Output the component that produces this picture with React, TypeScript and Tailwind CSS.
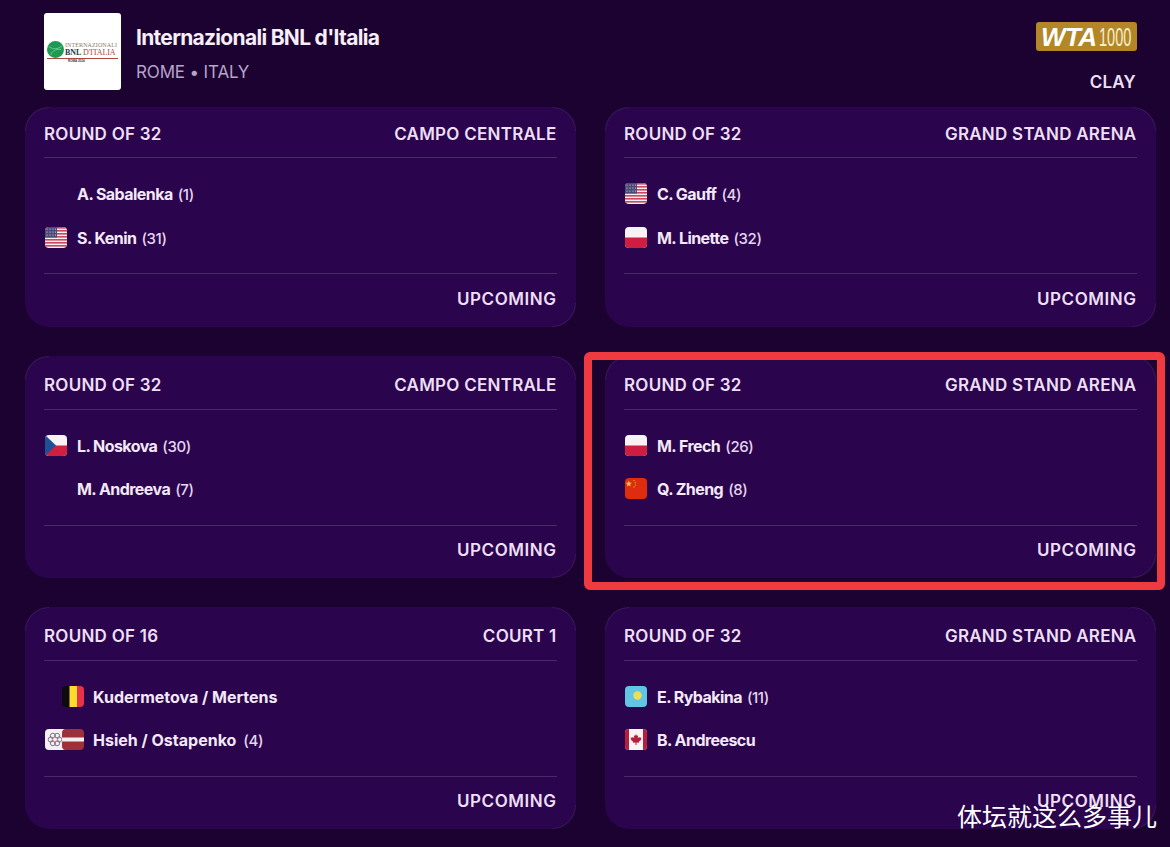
import React from 'react'

type FlagCode = 'us' | 'pl' | 'cn' | 'cz' | 'be' | 'tw' | 'lv' | 'kz' | 'ca'

const FlagArt = ({ code }: { code: FlagCode }) => {
    switch (code) {
        case 'us':
            return (
                <>
                    <rect width="22" height="21" fill="#f6eef2" />
                    {[0, 3, 6, 9, 12, 15, 18].map((y) => (
                        <rect key={y} y={y} width="22" height="1.6" fill="#c8485f" />
                    ))}
                    <rect width="12" height="10.5" fill="#4a4a78" />
                    {[2, 5, 8].map((y) =>
                        [2, 5, 8, 10.5].map((x) => (
                            <circle key={`${x}-${y}`} cx={x} cy={y} r="0.6" fill="#e8e4f0" />
                        )),
                    )}
                </>
            )
        case 'pl':
            return (
                <>
                    <rect width="22" height="21" fill="#f7f2f4" />
                    <rect y="10.5" width="22" height="10.5" fill="#cf1d41" />
                </>
            )
        case 'cn':
            return (
                <>
                    <rect width="22" height="21" fill="#dd2c0e" />
                    <path d="M3.8 2.5l.8 2.2 2.3.1-1.8 1.4.6 2.3-1.9-1.3-1.9 1.3.6-2.3L.7 4.8 3 4.7z" fill="#f7d046" />
                    <circle cx="9" cy="2.5" r="0.6" fill="#f7d046" />
                    <circle cx="10.3" cy="4.6" r="0.6" fill="#f7d046" />
                    <circle cx="10.3" cy="7" r="0.6" fill="#f7d046" />
                    <circle cx="9" cy="9" r="0.6" fill="#f7d046" />
                </>
            )
        case 'cz':
            return (
                <>
                    <rect width="22" height="21" fill="#f7f2f4" />
                    <rect y="10.5" width="22" height="10.5" fill="#d11f3f" />
                    <path d="M0 0l11 10.5L0 21z" fill="#1f4f95" />
                </>
            )
        case 'be':
            return (
                <>
                    <rect width="8" height="21" fill="#0d0b0d" />
                    <rect x="7.5" width="7.5" height="21" fill="#fbdc2e" />
                    <rect x="15" width="7" height="21" fill="#e8324a" />
                </>
            )
        case 'tw':
            return (
                <>
                    <rect width="22" height="21" fill="#f4f0f2" />
                    {[0, 60, 120, 180, 240, 300].map((deg) => (
                        <circle
                            key={deg}
                            cx={10 + 4.2 * Math.cos((deg * Math.PI) / 180)}
                            cy={10.5 + 4.2 * Math.sin((deg * Math.PI) / 180)}
                            r="2.6"
                            fill="none"
                            stroke="#6d6a86"
                            strokeWidth="0.9"
                        />
                    ))}
                    <circle cx="10" cy="10.5" r="2.4" fill="#f4f0f2" stroke="#b8646c" strokeWidth="0.9" />
                </>
            )
        case 'lv':
            return (
                <>
                    <rect width="22" height="21" fill="#9e3039" />
                    <rect y="8.5" width="22" height="4" fill="#f5eef0" />
                </>
            )
        case 'kz':
            return (
                <>
                    <rect width="22" height="21" fill="#62c5e4" />
                    <circle cx="12.5" cy="9.5" r="4.2" fill="#ecdf52" />
                </>
            )
        case 'ca':
            return (
                <>
                    <rect width="22" height="21" fill="#f8f4f5" />
                    <rect width="4" height="21" fill="#b81d3b" />
                    <rect x="18" width="4" height="21" fill="#b81d3b" />
                    <path d="M11 5l1 1.9 1.2-.6-.5 2.9 1.6-1.4.3 1 1.8-.3-.6 1.7.7.4-2.7 2.2.3 1-2.6-.3V16h-1v-2.5l-2.6.3.3-1-2.7-2.2.7-.4-.6-1.7 1.8.3.3-1 1.6 1.4-.5-2.9 1.2.6z" fill="#b81d3b" />
                </>
            )
    }
}

const Flag = ({ code, className = '' }: { code: FlagCode; className?: string }) => (
    <svg viewBox="0 0 22 21" className={`h-[21px] w-[22px] shrink-0 rounded-[4px] ${className}`}>
        <FlagArt code={code} />
    </svg>
)

type Player = {
    name: string
    seed?: string
    flags: FlagCode[]
}

type MatchType = {
    round: string
    court: string
    players: Player[]
    doubles?: boolean
    first?: boolean
    marked?: boolean
}

const matches: MatchType[] = [
    {
        round: 'ROUND OF 32',
        court: 'CAMPO CENTRALE',
        first: true,
        players: [
            { name: 'A. Sabalenka', seed: '(1)', flags: [] },
            { name: 'S. Kenin', seed: '(31)', flags: ['us'] },
        ],
    },
    {
        round: 'ROUND OF 32',
        court: 'GRAND STAND ARENA',
        first: true,
        players: [
            { name: 'C. Gauff', seed: '(4)', flags: ['us'] },
            { name: 'M. Linette', seed: '(32)', flags: ['pl'] },
        ],
    },
    {
        round: 'ROUND OF 32',
        court: 'CAMPO CENTRALE',
        players: [
            { name: 'L. Noskova', seed: '(30)', flags: ['cz'] },
            { name: 'M. Andreeva', seed: '(7)', flags: [] },
        ],
    },
    {
        round: 'ROUND OF 32',
        court: 'GRAND STAND ARENA',
        marked: true,
        players: [
            { name: 'M. Frech', seed: '(26)', flags: ['pl'] },
            { name: 'Q. Zheng', seed: '(8)', flags: ['cn'] },
        ],
    },
    {
        round: 'ROUND OF 16',
        court: 'COURT 1',
        doubles: true,
        players: [
            { name: 'Kudermetova / Mertens', flags: ['be'] },
            { name: 'Hsieh / Ostapenko', seed: '(4)', flags: ['tw', 'lv'] },
        ],
    },
    {
        round: 'ROUND OF 32',
        court: 'GRAND STAND ARENA',
        players: [
            { name: 'E. Rybakina', seed: '(11)', flags: ['kz'] },
            { name: 'B. Andreescu', flags: ['ca'] },
        ],
    },
]

const PlayerRow = ({ player, doubles }: { player: Player; doubles?: boolean }) => (
    <div className="flex h-[21px] items-center">
        <div className={`flex shrink-0 items-center justify-end ${doubles ? 'w-[40px]' : 'w-[23px]'}`}>
            {player.flags.map((code, i) => (
                <Flag key={code} code={code} className={i > 0 ? '-ml-[5px]' : ''} />
            ))}
        </div>
        <div className={`flex items-baseline pt-[1px] ${doubles ? 'ml-[9px]' : 'ml-[10px]'}`}>
            <span className={`text-[16px] font-bold text-[#f3e9f8] ${doubles ? 'tracking-[0px]' : 'tracking-[-0.55px]'}`}>
                {player.name}
            </span>
            {player.seed && (
                <span className={`text-[15px] font-medium tracking-[-0.4px] text-[#e4d6ee] ${doubles ? 'ml-[7px]' : 'ml-[5px]'}`}>
                    {player.seed}
                </span>
            )}
        </div>
    </div>
)

const MatchCard = ({ match }: { match: MatchType }) => (
    <div className="relative">
        <div
            className={`rounded-[24px] bg-[#2a044c] pl-[19px] pr-[19.5px] ${match.first ? 'h-[220px] pt-[18px]' : 'h-[222px] pt-[20px]'}`}
        >
            <div className="flex h-[20px] items-center justify-between text-[17px] font-semibold tracking-[0.25px] text-[#eddff5]">
                <span>{match.round}</span>
                <span>{match.court}</span>
            </div>
            <div className={`border-t border-[#472b66] pt-[25px] ${match.first ? 'mt-[12px]' : 'mt-[13px]'}`}>
                <div className={`flex flex-col ${match.first ? 'gap-[23px]' : 'gap-[22px]'}`}>
                    {match.players.map((player) => (
                        <PlayerRow key={player.name} player={player} doubles={match.doubles} />
                    ))}
                </div>
            </div>
            <div
                className={`flex items-center justify-end border-t border-[#472b66] pt-[2px] text-[17px] font-semibold tracking-[0.55px] text-[#eddff5] ${match.first ? 'mt-[25px] h-[50px]' : 'mt-[26px] h-[49px]'}`}
            >
                UPCOMING
            </div>
        </div>
        <span className="absolute left-0 top-0 h-[24px] w-[24px] rounded-tl-[24px] border-l border-t border-[#ffffff14]" />
        <span className="absolute right-0 top-0 h-[24px] w-[24px] rounded-tr-[24px] border-r border-t border-[#ffffff14]" />
        <span className="absolute bottom-0 right-0 h-[24px] w-[24px] rounded-br-[24px] border-b border-r border-[#ffffff14]" />
        {match.marked && (
            <div className="absolute -bottom-[12px] -left-[21px] -right-[9px] -top-[4px] rounded-[6px] border-[8.5px] border-[#ef3b40]" />
        )}
    </div>
)

const TournamentLogo = () => (
    <div className="flex h-[77px] w-[77px] shrink-0 flex-col justify-center rounded-[3px] bg-white px-[3px] pt-[2px]">
        <div className="flex items-center gap-[1px] border-b border-[#a9473c]">
            <svg viewBox="0 0 18 18" className="h-[17px] w-[17px] shrink-0">
                <circle cx="9" cy="9" r="9" fill="#1f9a55" />
                <path d="M2 6c4 3 10 3 14-1M4 15c1-4 5-7 11-6" stroke="#7fd7a0" fill="none" strokeWidth="0.8" />
            </svg>
            <div className="flex flex-col whitespace-nowrap font-['Liberation_Serif',serif] leading-none">
                <span className="text-[6px] tracking-[0.1px] text-[#8a7a6a]">INTERNAZIONALI</span>
                <span className="mt-[1px] text-[8px] tracking-[-0.1px] text-[#a9473c]">
                    <b className="text-[#1d3a4a]">BNL</b> D'ITALIA
                </span>
            </div>
        </div>
        <span className="ml-[21px] font-['Liberation_Sans',sans-serif] text-[3px] font-bold leading-[5px] text-[#333]">
            ROMA 2024
        </span>
    </div>
)

export default function App() {
    return (
        <div className="relative h-[847px] w-[1170px] overflow-hidden bg-[#1c0230] pl-[25px] pr-[14px] font-['Inter',sans-serif]">
            <div className="flex h-[107px] pl-[19px] pr-[19px] pt-[13px]">
                <TournamentLogo />
                <div className="ml-[15px] flex flex-col">
                    <span className="mt-[11px] text-[21px] font-bold leading-[28px] tracking-[-0.7px] text-[#f6eef9]">
                        Internazionali BNL d'Italia
                    </span>
                    <span className="mt-[10px] text-[17px] font-normal leading-[20px] tracking-[-0.15px] text-[#b7a3cc]">
                        ROME • ITALY
                    </span>
                </div>
                <div className="ml-auto flex flex-col items-end pt-[9px]">
                    <div className="flex h-[29px] w-[101px] items-center gap-[3px] rounded-[3px] bg-[#b38628] pl-[5px]">
                        <span className="font-['Liberation_Sans',sans-serif] text-[26px] font-bold italic leading-none tracking-[-0.6px] text-white">
                            WTA
                        </span>
                        <span className="inline-block w-[33px] origin-left scale-x-[0.56] font-['Liberation_Sans',sans-serif] text-[26px] leading-none text-[#f6eec8]">
                            1000
                        </span>
                    </div>
                    <span className="mr-[1px] mt-[21px] text-[17px] font-semibold leading-[20px] tracking-[0.25px] text-[#eddff5]">
                        CLAY
                    </span>
                </div>
            </div>
            <div className="grid grid-cols-[551px_551px] gap-x-[29px] gap-y-[29px]">
                {matches.map((match, i) => (
                    <MatchCard key={i} match={match} />
                ))}
            </div>
            <div className="absolute bottom-[16px] right-[13px] font-['Noto_Sans_CJK_SC',sans-serif] text-[25px] leading-[32px] text-white">
                体坛就这么多事儿
            </div>
        </div>
    )
}
